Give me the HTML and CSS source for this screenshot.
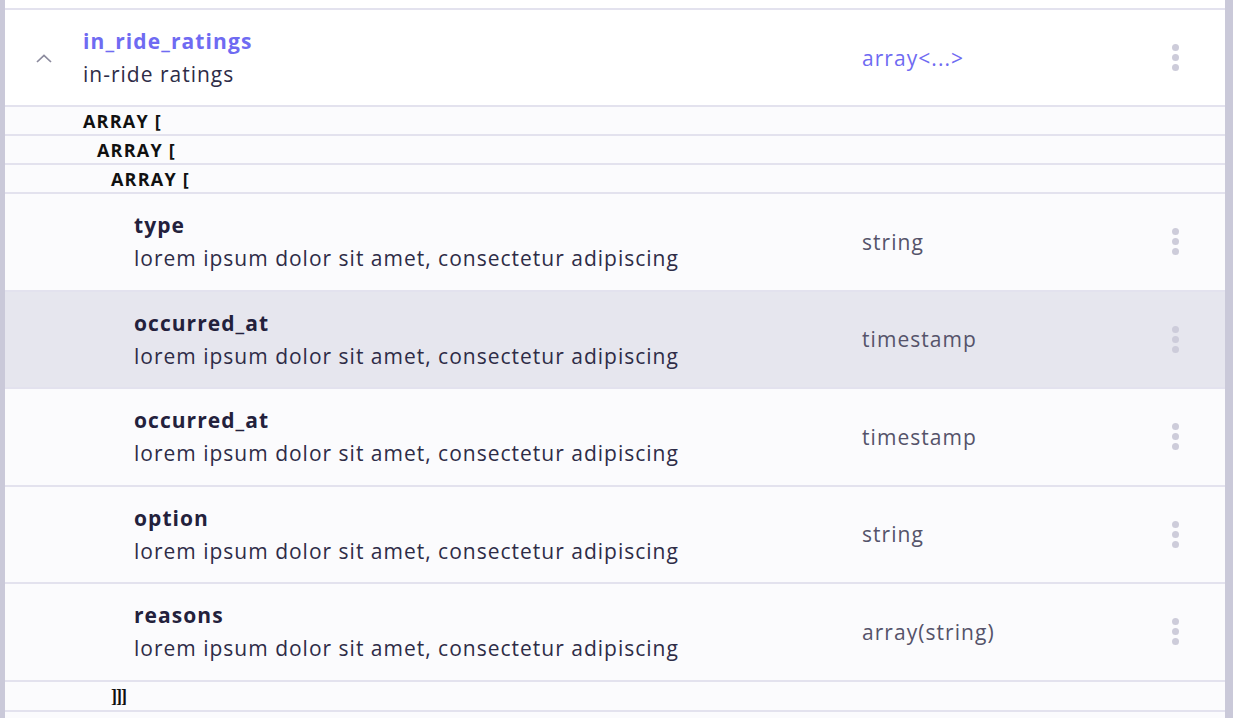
FILE: index.html
```html
<!DOCTYPE html>
<html>
<head>
<meta charset="utf-8">
<link rel="stylesheet" href="styles.css">
</head>
<body>
<div class="panel">
  <div class="top-gap"></div>
  <div class="row header-row">
    <div class="chev">
      <svg width="18" height="11" viewBox="0 0 18 11"><path d="M2 9 L9 2.5 L16 9" fill="none" stroke="#8b8a9d" stroke-width="1.7"/></svg>
    </div>
    <div class="main">
      <div class="name link">in_ride_ratings</div>
      <div class="desc">in-ride ratings</div>
    </div>
    <div class="type link">array&lt;...&gt;</div>
    <div class="menu"><span class="dots"><i></i><i></i><i></i></span></div>
  </div>
  <div class="arr lvl1">ARRAY [</div>
  <div class="arr lvl2">ARRAY [</div>
  <div class="arr lvl3">ARRAY [</div>
  <div class="row field">
    <div class="main">
      <div class="name">type</div>
      <div class="desc">lorem ipsum dolor sit amet, consectetur adipiscing</div>
    </div>
    <div class="type">string</div>
    <div class="menu"><span class="dots"><i></i><i></i><i></i></span></div>
  </div>
  <div class="row field active">
    <div class="main">
      <div class="name">occurred_at</div>
      <div class="desc">lorem ipsum dolor sit amet, consectetur adipiscing</div>
    </div>
    <div class="type">timestamp</div>
    <div class="menu"><span class="dots"><i></i><i></i><i></i></span></div>
  </div>
  <div class="row field">
    <div class="main">
      <div class="name">occurred_at</div>
      <div class="desc">lorem ipsum dolor sit amet, consectetur adipiscing</div>
    </div>
    <div class="type">timestamp</div>
    <div class="menu"><span class="dots"><i></i><i></i><i></i></span></div>
  </div>
  <div class="row field">
    <div class="main">
      <div class="name">option</div>
      <div class="desc">lorem ipsum dolor sit amet, consectetur adipiscing</div>
    </div>
    <div class="type">string</div>
    <div class="menu"><span class="dots"><i></i><i></i><i></i></span></div>
  </div>
  <div class="row field">
    <div class="main">
      <div class="name">reasons</div>
      <div class="desc">lorem ipsum dolor sit amet, consectetur adipiscing</div>
    </div>
    <div class="type">array(string)</div>
    <div class="menu"><span class="dots"><i></i><i></i><i></i></span></div>
  </div>
  <div class="arr close">]]]</div>
  <div class="bottom-gap"></div>
</div>
</body>
</html>
```
FILE: styles.css
```css
html, body {
  margin: 0;
  padding: 0;
  background: #ffffff;
}
body {
  font-family: "Open Sans", "Liberation Sans", sans-serif;
  color: #2e2c47;
}
.panel {
  height: 718px;
  border-left: 5px solid #cac9d9;
  border-right: 8px solid #cac9d9;
  background: #fbfbfd;
  overflow: hidden;
}
.top-gap {
  height: 8px;
  background: #ffffff;
  border-bottom: 2px solid #e3e2ee;
}
.row {
  display: flex;
  align-items: center;
  border-bottom: 2px solid #e3e2ee;
}
.header-row {
  height: 95px;
  background: #ffffff;
}
.field {
  height: 95.5px;
  background: #fbfbfd;
}
.field.active {
  background: #e6e6ee;
}
.chev {
  width: 78px;
  display: flex;
  justify-content: center;
  padding-top: 2px;
}
.main {
  flex: 1;
  display: flex;
  flex-direction: column;
  gap: 7px;
}
.field .main {
  padding-left: 129px;
}
.name {
  font-size: 21px;
  font-weight: 700;
  color: #23213c;
  line-height: 26px;
  letter-spacing: 1.05px;
}
.name.link {
  color: #6f6bf2;
  font-weight: 700;
  letter-spacing: 1.1px;
}
.desc {
  font-size: 21px;
  line-height: 26px;
  color: #2e2c47;
  letter-spacing: 1px;
}
.type {
  width: 263px;
  font-size: 21px;
  color: #55536a;
  letter-spacing: 1.05px;
}
.type.link {
  color: #6f6bf2;
}
.menu {
  width: 100px;
  display: flex;
  justify-content: center;
}
.dots {
  display: flex;
  flex-direction: column;
  gap: 3px;
}
.dots i {
  display: block;
  width: 7px;
  height: 7px;
  border-radius: 50%;
  background: #cdccda;
}
.arr {
  height: 27px;
  line-height: 28px;
  font-size: 18px;
  font-weight: 700;
  color: #111111;
  letter-spacing: 1.2px;
  border-bottom: 2px solid #e3e2ee;
  background: #fbfbfd;
}
.lvl1 { padding-left: 78px; }
.lvl2 { padding-left: 92px; }
.lvl3 { padding-left: 106px; }
.close {
  height: 28px;
  padding-left: 106px;
  font-family: "Liberation Serif", serif;
  font-size: 18px;
  letter-spacing: -1px;
}
.bottom-gap {
  height: 8px;
}
```
